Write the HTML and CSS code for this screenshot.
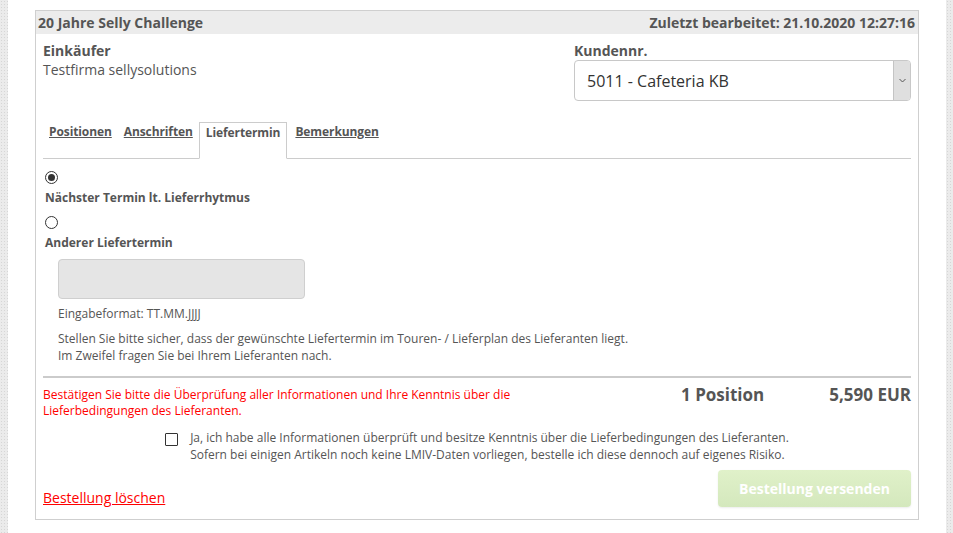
FILE: index.html
```html
<!DOCTYPE html>
<html lang="de">
<head>
<meta charset="utf-8">
<title>20 Jahre Selly Challenge</title>
<link rel="stylesheet" href="styles.css">
</head>
<body>
<div class="page">
  <div class="edge edge-left"></div>
  <main class="main">
    <section class="panel">
      <header class="panel-head">
        <span>20 Jahre Selly Challenge</span>
        <span>Zuletzt bearbeitet: 21.10.2020 12:27:16</span>
      </header>
      <div class="panel-body">
        <div class="top-row">
          <div class="buyer">
            <div class="label">Einkäufer</div>
            <div class="value">Testfirma sellysolutions</div>
          </div>
          <div class="customer">
            <div class="label">Kundennr.</div>
            <div class="select">
              <span class="select-text">5011 - Cafeteria KB</span>
              <span class="select-arrow">
                <svg width="7" height="5" viewBox="0 0 7 5"><path d="M0.5 1 L3.5 4 L6.5 1" fill="none" stroke="#555" stroke-width="1"/></svg>
              </span>
            </div>
          </div>
        </div>

        <nav class="tabs">
          <a class="tab">Positionen</a>
          <a class="tab">Anschriften</a>
          <a class="tab active">Liefertermin</a>
          <a class="tab">Bemerkungen</a>
        </nav>

        <div class="option">
          <span class="radio checked"></span>
          <div class="option-label">Nächster Termin lt. Lieferrhytmus</div>
        </div>
        <div class="option">
          <span class="radio"></span>
          <div class="option-label">Anderer Liefertermin</div>
        </div>

        <div class="date-block">
          <div class="date-input"></div>
          <p class="hint">Eingabeformat: TT.MM.JJJJ</p>
          <p class="note">Stellen Sie bitte sicher, dass der gewünschte Liefertermin im Touren- / Lieferplan des Lieferanten liegt.<br>Im Zweifel fragen Sie bei Ihrem Lieferanten nach.</p>
        </div>

        <div class="separator"></div>

        <div class="summary">
          <p class="warning">Bestätigen Sie bitte die Überprüfung aller Informationen und Ihre Kenntnis über die Lieferbedingungen des Lieferanten.</p>
          <div class="totals">
            <span class="count">1 Position</span>
            <span class="sum">5,590 EUR</span>
          </div>
        </div>

        <div class="confirm">
          <span class="checkbox"></span>
          <p class="confirm-text">Ja, ich habe alle Informationen überprüft und besitze Kenntnis über die Lieferbedingungen des Lieferanten.<br>Sofern bei einigen Artikeln noch keine LMIV-Daten vorliegen, bestelle ich diese dennoch auf eigenes Risiko.</p>
        </div>

        <div class="actions">
          <a class="delete">Bestellung löschen</a>
          <button class="send" type="button">Bestellung versenden</button>
        </div>
      </div>
    </section>
  </main>
  <div class="edge edge-right"></div>
</div>
</body>
</html>
```

FILE: styles.css
```css
* { box-sizing: border-box; }

html, body {
  margin: 0;
  padding: 0;
  background: #fff;
}

body {
  font-family: "Open Sans", "DejaVu Sans", sans-serif;
  color: #555;
  font-size: 12px;
}

.page {
  display: flex;
  height: 533px;
  overflow: hidden;
}

.edge {
  flex: none;
  background-color: #ebebeb;
  background-image: radial-gradient(#d6d6d6 0.8px, transparent 0.9px);
  background-size: 3px 3px;
}

.edge-left { width: 8px; }
.edge-right { width: 7px; }

.main {
  flex: 1;
  padding: 10px 27px 0 27px;
}

.panel {
  width: 884px;
  border: 1px solid #cfcfcf;
  background: #fff;
}

.panel-head {
  display: flex;
  justify-content: space-between;
  align-items: center;
  height: 23px;
  padding: 0 3px 0 2px;
  background: #ececec;
  font-weight: 700;
  font-size: 14px;
  color: #555;
}

.panel-body {
  padding: 8px 7px 12px 7px;
}

.top-row {
  display: flex;
  justify-content: space-between;
}

.label {
  font-weight: 700;
  font-size: 14px;
  line-height: 18px;
}

.value {
  font-size: 14px;
  line-height: 20px;
}

.customer {
  width: 337px;
}

.select {
  display: flex;
  align-items: stretch;
  height: 41px;
  border: 1px solid #c8c8c8;
  border-radius: 4px;
  background: #fff;
  overflow: hidden;
}

.select-text {
  flex: 1;
  display: flex;
  align-items: center;
  padding-left: 12px;
  font-size: 16px;
  color: #333;
}

.select-arrow {
  flex: none;
  width: 17px;
  display: flex;
  align-items: center;
  justify-content: center;
  background: #dfdfdf;
  border-left: 1px solid #c4c4c4;
}

.tabs {
  display: flex;
  margin-top: 21px;
  height: 37px;
  border-bottom: 1px solid #ccc;
}

.tab {
  height: 37px;
  padding: 1px 6px 0 6px;
  font-weight: 700;
  font-size: 12px;
  line-height: 17px;
  letter-spacing: -0.1px;
  color: #555;
  text-decoration: underline;
}

.tab.active {
  padding: 1px 6px 0 6px;
  margin: 0 2px -1px 0;
  border: 1px solid #ccc;
  border-bottom-color: #fff;
  background: #fff;
  text-decoration: none;
}

.option {
  margin-top: 12px;
  padding-left: 2px;
}

.option + .option {
  margin-top: 10px;
}

.radio {
  display: block;
  width: 13px;
  height: 13px;
  border: 1px solid #333;
  border-radius: 50%;
  position: relative;
  margin-bottom: 5px;
}

.radio.checked::after {
  content: "";
  position: absolute;
  left: 2px;
  top: 2px;
  width: 7px;
  height: 7px;
  border-radius: 50%;
  background: #333;
}

.option-label {
  font-weight: 700;
  font-size: 12px;
  line-height: 17px;
}

.date-block {
  padding-left: 15px;
  margin-top: 8px;
}

.date-input {
  width: 247px;
  height: 40px;
  background: #e5e5e5;
  border: 1px solid #cfcfcf;
  border-radius: 4px;
}

.hint {
  margin: 6px 0 0 0;
  font-size: 12px;
  line-height: 17px;
}

.note {
  margin: 8px 0 0 0;
  font-size: 12px;
  line-height: 17px;
}

.separator {
  margin-top: 12px;
  height: 2px;
  background: #cbcbcb;
}

.summary {
  display: flex;
  justify-content: space-between;
  align-items: flex-start;
  margin-top: 9px;
}

.warning {
  margin: 0;
  width: 520px;
  color: #f00;
  font-size: 12px;
  line-height: 16px;
}

.totals {
  display: flex;
  gap: 65px;
  font-weight: 700;
  font-size: 17px;
  line-height: 16px;
  color: #555;
}

.confirm {
  display: flex;
  justify-content: center;
  align-items: flex-start;
  margin-top: 10px;
  gap: 12px;
}

.checkbox {
  flex: none;
  width: 13px;
  height: 13px;
  margin-top: 4px;
  border: 1px solid #333;
  border-radius: 1px;
}

.confirm-text {
  margin: 0;
  font-size: 12px;
  line-height: 17px;
}

.actions {
  display: flex;
  justify-content: space-between;
  align-items: flex-end;
  margin-top: 7px;
}

.delete {
  font-size: 14px;
  line-height: 19px;
  color: #f00;
  text-decoration: underline;
}

.send {
  width: 193px;
  height: 37px;
  border: none;
  border-radius: 4px;
  background: linear-gradient(#e0f1c9, #d4e8bd);
  box-shadow: 0 1px 2px rgba(0, 0, 0, 0.08);
  color: #fff;
  font-family: "Open Sans", "DejaVu Sans", sans-serif;
  font-weight: 700;
  font-size: 14px;
}
```
